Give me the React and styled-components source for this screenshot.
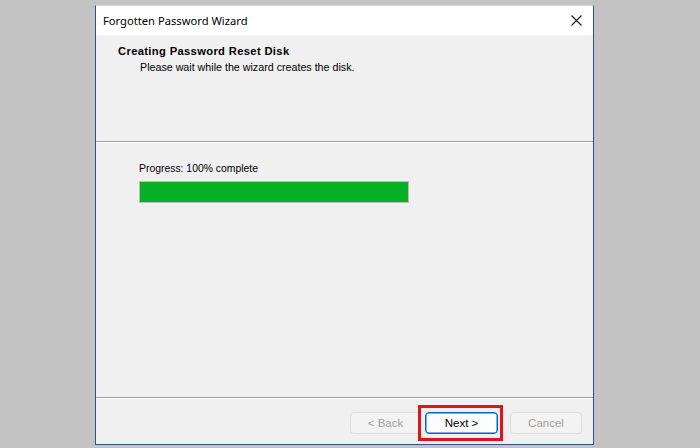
import styled, { createGlobalStyle } from 'styled-components';

const GlobalStyle = createGlobalStyle`
  html, body {
    margin: 0;
    padding: 0;
    background: #c3c3c3;
  }
`;

const Page = styled.div`
  width: 700px;
  height: 448px;
  padding: 5px 0 0 95px;
  box-sizing: border-box;
  background: #c3c3c3;
`;

const Window = styled.div`
  width: 499px;
  height: 440px;
  box-sizing: border-box;
  display: flex;
  flex-direction: column;
  border: 1px solid #2f4f8f;
  border-top-color: #d4d4d4;
  background: #f0f0f0;
  font-family: 'Liberation Sans', Arial, sans-serif;
  font-size: 11px;
  color: #000;
`;

const TitleBar = styled.div`
  height: 29px;
  flex: none;
  display: flex;
  align-items: center;
  justify-content: space-between;
  padding: 0 11px 0 7px;
  background: #fff;
  font-family: 'Noto Sans', 'Open Sans', sans-serif;
  font-size: 11.2px;
  color: #000;
`;

const CloseIcon = styled.svg`
  width: 11px;
  height: 11px;
  margin-top: -1px;
`;

const Header = styled.div`
  height: 107px;
  flex: none;
  box-sizing: border-box;
  padding: 10px 21px 0 22px;
  border-bottom: 1px solid #a0a0a0;
  box-shadow: 0 1px 0 #fff;
  background: #f0f0f0;
`;

const Heading = styled.div`
  font-weight: bold;
  font-size: 11.2px;
  letter-spacing: 0.35px;
  line-height: 13px;
`;

const SubHeading = styled.div`
  margin: 3px 0 0 22px;
  font-size: 10.7px;
  line-height: 13px;
`;

const Content = styled.div`
  flex: 1;
  margin-top: 1px;
  padding: 19px 42px 0 43px;
  border-bottom: 1px solid #a0a0a0;
  box-shadow: 0 1px 0 #fff;
`;

const Label = styled.div`
  font-size: 10.4px;
  line-height: 13px;
  margin-bottom: 6px;
`;

const ProgressTrack = styled.div`
  width: 270px;
  height: 22px;
  box-sizing: border-box;
  border: 1px solid #bcbcbc;
  background: #e6e6e6;
`;

const ProgressFill = styled.div`
  height: 100%;
  background: #06b025;
`;

const Footer = styled.div`
  height: 45px;
  flex: none;
  margin-top: 1px;
  display: flex;
  align-items: flex-start;
  justify-content: flex-end;
  padding: 13px 11px 0 0;
  box-sizing: border-box;
`;

const Button = styled.button`
  position: relative;
  width: ${p => p.$w || 72}px;
  height: 22px;
  margin-left: ${p => p.$gap || 0}px;
  padding: 0;
  box-sizing: border-box;
  border-radius: 4px;
  font-family: 'Liberation Sans', Arial, sans-serif;
  font-size: 11.5px;
  border: 1px solid ${p => (p.$primary ? '#0067c0' : '#dcdcdc')};
  background: ${p => (p.$primary ? '#fdfdfd' : '#f3f3f3')};
  color: ${p => (p.$primary ? '#000' : '#a2a2a2')};
  box-shadow: ${p => (p.$primary ? 'inset 0 0 0 0.5px #0067c0' : 'none')};
`;

const Highlight = styled.span`
  position: absolute;
  left: -8px;
  top: -8px;
  right: -6px;
  bottom: -8px;
  border: 3px solid #e3131d;
  pointer-events: none;
`;

export default function App() {
  const progress = 100;

  return (
    <>
      <GlobalStyle />
      <Page>
        <Window>
          <TitleBar>
            <span>Forgotten Password Wizard</span>
            <CloseIcon viewBox="0 0 11 11">
              <path d="M0.5 0.5 L10.5 10.5 M10.5 0.5 L0.5 10.5" stroke="#1a1a1a" strokeWidth="1.1" fill="none" />
            </CloseIcon>
          </TitleBar>
          <Header>
            <Heading>Creating Password Reset Disk</Heading>
            <SubHeading>Please wait while the wizard creates the disk.</SubHeading>
          </Header>
          <Content>
            <Label>Progress: {progress}% complete</Label>
            <ProgressTrack>
              <ProgressFill style={{ width: `${progress}%` }} />
            </ProgressTrack>
          </Content>
          <Footer>
            <Button $w={71} disabled>&lt; Back</Button>
            <Button $w={73} $gap={4} $primary>
              Next &gt;
              <Highlight />
            </Button>
            <Button $w={72} $gap={12} disabled>Cancel</Button>
          </Footer>
        </Window>
      </Page>
    </>
  );
}
